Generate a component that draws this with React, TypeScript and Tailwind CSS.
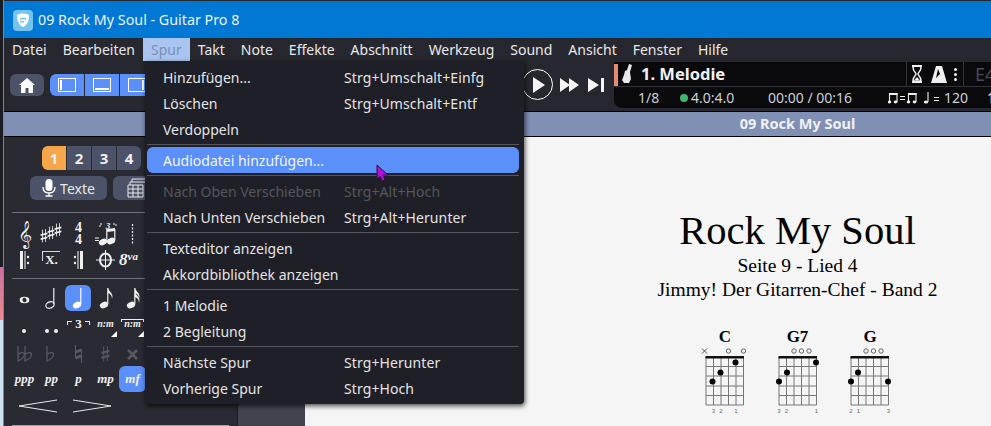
const menuBar = ["Datei", "Bearbeiten", "Spur", "Takt", "Note", "Effekte", "Abschnitt", "Werkzeug", "Sound", "Ansicht", "Fenster", "Hilfe"];

function MenuRow({ label, keys, off, on }: { label: string; keys?: string; off?: boolean; on?: boolean }) {
  return (
    <div className={`flex h-[26px] items-center rounded-md pl-[16px] text-[14px] ${on ? "bg-[#5b8ff9] text-[#f2f6ff]" : off ? "text-[#55565c]" : "text-[#e4e4e6]"}`}>
      <span className="w-[181px] shrink-0">{label}</span>
      {keys && <span className="tracking-[0.1px]">{keys}</span>}
    </div>
  );
}

function Sep() {
  return <div className="my-[2px] h-px bg-[#55565c]" />;
}

function ChordBox({ name, dots, top, fingers, mute }: { name: string; dots: number[][]; top: string[]; fingers: string[]; mute?: boolean }) {
  const xs = [0, 7.5, 15, 22.5, 30, 37.5];
  return (
    <div className="flex w-[38px] flex-col items-center">
      <div className="h-[17px] font-['Liberation_Serif',serif] text-[17px] font-bold leading-[17px] text-black">{name}</div>
      <svg width="52" height="72" viewBox="-7 0 52 72" className="-mx-[7px] shrink-0">
        {xs.map((x) => (
          <line key={x} x1={x} y1="12" x2={x} y2="60" stroke="#777" strokeWidth="1" />
        ))}
        {[12, 21.5, 31, 41, 50.5, 60].map((y) => (
          <line key={y} x1="0" y1={y} x2="37.5" y2={y} stroke="#777" strokeWidth="1" />
        ))}
        <rect x="-0.5" y="11" width="38.5" height="2.500" fill="#111" />
        {dots.map(([x, y]) => (
          <circle key={`${x}-${y}`} cx={x} cy={y} r="3" fill="#000" />
        ))}
        {top.map((t, i) =>
          t === "o" ? <circle key={i} cx={xs[i]} cy="6" r="2.200" fill="none" stroke="#555" strokeWidth="0.9" /> : null
        )}
        {mute && <path d="M-4 3.500l5 5m0-5l-5 5" stroke="#444" strokeWidth="0.9" />}
        {fingers.map((f, i) =>
          f ? (
            <text key={i} x={xs[i]} y="68" fontSize="6" fill="#666" textAnchor="middle" fontFamily="Liberation Sans">
              {f}
            </text>
          ) : null
        )}
      </svg>
    </div>
  );
}

// small notation icons, all drawn on a 27 wide cell
function Cell({ children, h = 24, color = "#f0f0f2" }: { children: React.ReactNode; h?: number; color?: string }) {
  return (
    <svg width="27" height={h} viewBox={`0 0 27 ${h}`} className="shrink-0" fill={color} stroke={color} strokeWidth="0">
      {children}
    </svg>
  );
}

function SharpMark({ x, y, s = 1 }: { x: number; y: number; s?: number }) {
  return (
    <g transform={`translate(${x} ${y}) scale(${s})`}>
      <path d="M-1.800-7.500V7.500M1.800-8V7" strokeWidth="1" fill="none" />
      <path d="M-4-2.200L4-4.200V-2L-4 0zM-4 2.500L4 .5V2.700L-4 4.700z" />
    </g>
  );
}

function FlatMark({ x, y }: { x: number; y: number }) {
  return <path transform={`translate(${x} ${y})`} d="M-3-9V6C1 4 3.500 2 3.500-.5 3.500-3-.5-3-3-.5" fill="none" strokeWidth="1.300" />;
}

function Note({ x, y, stem = 15, flags = 0, hollow }: { x: number; y: number; stem?: number; flags?: number; hollow?: boolean }) {
  return (
    <g>
      <ellipse cx={x} cy={y} rx="4.300" ry="3.100" transform={`rotate(-22 ${x} ${y})`} fill={hollow ? "none" : undefined} strokeWidth={hollow ? 1.200 : 0} />
      <line x1={x + 3.800} y1={y - 1} x2={x + 3.800} y2={y - stem} strokeWidth="1.200" />
      {flags > 0 && <path d={`M${x + 4} ${y - stem}c1 4 6 5 4 11c0-4-2-5-4-6z`} />}
      {flags > 1 && <path d={`M${x + 4} ${y - stem + 4}c1 4 6 5 4 11c0-4-2-5-4-6z`} />}
    </g>
  );
}

function Dyn({ c, on }: { c: string; on?: boolean }) {
  return (
    <span className={`flex h-[26px] w-[27px] shrink-0 items-center justify-center rounded-md font-['Liberation_Serif',serif] text-[13px] font-bold italic text-[#f0f0f2] ${on ? "bg-[#5b8ff9]" : ""}`}>
      {c}
    </span>
  );
}

function TupletMark({ wide }: { wide?: boolean }) {
  return (
    <span className="relative flex h-[22px] w-[27px] shrink-0 justify-center font-['Liberation_Serif',serif] text-[10px] font-bold italic leading-[16px] text-[#f0f0f2]">
      {wide && <span className="absolute left-[2px] right-[2px] top-[3px] h-[3px] border-x border-t border-[#f0f0f2]" />}
      n:m
      <span className="absolute bottom-[1px] right-[2px] h-0 w-0 border-b-[6px] border-l-[6px] border-b-white border-l-transparent" />
    </span>
  );
}

function Sidebar() {
  return (
    <aside className="flex w-[233px] shrink-0 flex-col overflow-hidden bg-[#292a32] px-[8px]">
      <div className="ml-[30px] mt-[9px] flex h-[24px] w-[99px] shrink-0 overflow-hidden rounded-md text-[15px] font-bold text-[#f0f0f2]">
        <span className="flex w-[24px] items-center justify-center bg-[#f5a54a]">1</span>
        <span className="flex w-[25px] items-center justify-center border-l border-[#292a32] bg-[#4c5368]">2</span>
        <span className="flex w-[25px] items-center justify-center border-l border-[#292a32] bg-[#4c5368]">3</span>
        <span className="flex w-[25px] items-center justify-center border-l border-[#292a32] bg-[#4c5368]">4</span>
      </div>
      <div className="ml-[18px] mt-[6px] flex h-[24px] shrink-0 gap-[6px]">
        <div className="flex w-[77px] shrink-0 items-center justify-center gap-[4px] rounded-md bg-[#4c5368] text-[14px] text-[#e8e8ea]">
          <svg width="14" height="18" viewBox="0 0 14 18" fill="#ffffff">
            <rect x="3.500" y="0" width="7" height="12" rx="3.500" />
            <path d="M1 8c0 4 2.500 6 6 6s6-2 6-6M7 14v3M3.500 17h7" fill="none" stroke="#ffffff" strokeWidth="1.300" />
          </svg>
          Texte
        </div>
        <div className="flex w-[50px] shrink-0 items-center justify-center rounded-md bg-[#4c5368]">
          <svg width="22" height="20" viewBox="0 0 22 20" fill="none" stroke="#e8e8ea" strokeWidth="1">
            <path d="M5 4V1h16v13h-3M3 7V4h16v12M1 7h15v12H1zM1 11h15M1 15h15M6 7v12M11 7v12" />
          </svg>
        </div>
      </div>
      <div className="mt-[12px] h-px shrink-0 bg-[#70727a]" />

      <div className="-ml-px mt-[9px] flex h-[24px] shrink-0">
        <span className="flex w-[27px] shrink-0 items-center justify-center font-['DejaVu_Sans',sans-serif] text-[24px] leading-none text-[#f0f0f2]">𝄞</span>
        <Cell>
          <SharpMark x={6} y={14} s={0.85} />
          <SharpMark x={13} y={11} s={0.85} />
          <SharpMark x={20} y={8} s={0.85} />
        </Cell>
        <span className="flex w-[27px] shrink-0 flex-col items-center justify-center font-['Liberation_Serif',serif] text-[14px] font-bold leading-[12px] text-[#f0f0f2]">
          <span>4</span>
          <span>4</span>
        </span>
        <Cell>
          <path d="M3 16h4M3 18.500h4" strokeWidth="1" />
          <Note x={11} y={20} stem={13} />
          <Note x={19} y={19} stem={12} />
          <path d="M15 7l8-1v3l-8 1z" />
          <path d="M8 5V2h3M21 2h3v3" strokeWidth="1" strokeDasharray="2 1" fill="none" />
          <text x="16" y="7" fontSize="9" fontWeight="700" fontStyle="italic" textAnchor="middle" fontFamily="Liberation Serif">3</text>
        </Cell>
        <Cell>
          <line x1="13.500" y1="2" x2="13.500" y2="22" strokeWidth="1.200" strokeDasharray="2 1.500" />
        </Cell>
      </div>
      <div className="-ml-px mt-[4px] flex h-[20px] shrink-0">
        <Cell h={20}>
          <path d="M9 1h3v18H9zM13.500 1h1v18h-1z" />
          <circle cx="17" cy="7" r="1.200" />
          <circle cx="17" cy="13" r="1.200" />
        </Cell>
        <span className="relative flex h-[20px] w-[27px] shrink-0 justify-center font-['Liberation_Serif',serif] text-[13px] font-bold leading-[20px] text-[#f0f0f2]">
          <span className="absolute left-[4px] top-[1px] h-[10px] w-[18px] border-l border-t border-[#d8d8da]" />
          X.
        </span>
        <Cell h={20}>
          <path d="M15 1h3v18h-3zM12.500 1h1v18h-1z" />
          <circle cx="10" cy="7" r="1.200" />
          <circle cx="10" cy="13" r="1.200" />
        </Cell>
        <Cell h={20}>
          <ellipse cx="13.500" cy="10" rx="5.500" ry="6.500" fill="none" strokeWidth="2" />
          <path d="M13.500 0v20M4 10h19" strokeWidth="1" />
        </Cell>
        <span className="w-[27px] shrink-0 whitespace-nowrap font-['Liberation_Serif',serif] text-[17px] font-bold italic leading-[20px] text-[#f0f0f2]">
          8<span className="relative -top-[5px] text-[11px]">va</span>
        </span>
      </div>
      <div className="mt-[8px] h-px shrink-0 bg-[#70727a]" />

      <div className="-ml-px mt-[6px] flex h-[26px] shrink-0">
        <Cell h={26}>
          <ellipse cx="13.500" cy="15" rx="4.800" ry="3.300" />
          <ellipse cx="13.500" cy="15" rx="2" ry="2.200" fill="#292a32" transform="rotate(-30 13.500 15)" />
        </Cell>
        <Cell h={26}>
          <Note x={12} y={20} stem={17} hollow />
        </Cell>
        <span className="flex h-[26px] w-[26px] shrink-0 items-center justify-center rounded-md bg-[#5b8ff9]">
          <Cell h={26} color="#ffffff">
            <Note x={12} y={20} stem={17} />
          </Cell>
        </span>
        <span className="w-px shrink-0" />
        <Cell h={26}>
          <Note x={12} y={20} stem={17} flags={1} />
        </Cell>
        <Cell h={26}>
          <Note x={12} y={20} stem={17} flags={2} />
        </Cell>
      </div>
      <div className="-ml-px mt-[5px] flex h-[22px] shrink-0">
        <Cell h={22}>
          <circle cx="13" cy="15" r="2" />
        </Cell>
        <Cell h={22}>
          <circle cx="9" cy="15" r="2" />
          <circle cx="18" cy="15" r="2" />
        </Cell>
        <span className="relative flex h-[22px] w-[27px] shrink-0 justify-center font-['Liberation_Serif',serif] text-[13px] font-bold leading-[16px] text-[#f0f0f2]">
          <span className="absolute left-[2px] top-[5px] h-[4px] w-[5px] border-l border-t border-[#f0f0f2]" />
          3
          <span className="absolute right-[2px] top-[5px] h-[4px] w-[5px] border-r border-t border-[#f0f0f2]" />
        </span>
        <TupletMark />
        <TupletMark wide />
      </div>
      <div className="-ml-px mt-[6px] flex h-[20px] shrink-0">
        <Cell h={20} color="#575862">
          <g strokeWidth="1.300">
            <FlatMark x={10} y={11} />
            <FlatMark x={17} y={11} />
          </g>
        </Cell>
        <Cell h={20} color="#575862">
          <FlatMark x={12} y={11} />
        </Cell>
        <Cell h={20} color="#575862">
          <path d="M10.500 1v13M16.500 6v13" strokeWidth="1.200" fill="none" />
          <path d="M10.500 6.500l6-2v3l-6 2zM10.500 12.500l6-2v3l-6 2z" />
        </Cell>
        <Cell h={20} color="#575862">
          <SharpMark x={13.500} y={10} />
        </Cell>
        <Cell h={20} color="#575862">
          <path d="M9 6l9 9M18 6l-9 9" strokeWidth="2.600" />
        </Cell>
      </div>
      <div className="-ml-px mt-[2px] flex h-[26px] shrink-0">
        <Dyn c="ppp" />
        <Dyn c="pp" />
        <Dyn c="p" />
        <Dyn c="mp" />
        <Dyn c="mf" on />
      </div>
      <svg width="110" height="14" viewBox="0 0 110 14" className="ml-[1px] mt-[7px] shrink-0" fill="none" stroke="#e8e8ea" strokeWidth="1">
        <path d="M44 1L6 7l38 6M60 1l38 6-38 6" />
      </svg>
      <div className="mt-[12px] h-px shrink-0 bg-[#a0a2aa]" />
    </aside>
  );
}

function PanelIcon({ d }: { d: string }) {
  return (
    <span className="flex h-[22px] w-[34px] items-center justify-center bg-[#5b8ff9]">
      <svg width="18" height="14" viewBox="0 0 18 14" fill="#ffffff">
        <path d="M0 0h18v14H0zM1 1v12h16V1z" fillRule="evenodd" />
        <path d={d} />
      </svg>
    </span>
  );
}

function SmallBeam({ x }: { x: number }) {
  return (
    <g transform={`translate(${x} 0)`}>
      <path d="M1.500 2h8v2h-8z" />
      <path d="M1.500 2v9M9 2v9" stroke="#f0f0f0" strokeWidth="1.100" />
      <ellipse cx="1.500" cy="11" rx="1.800" ry="1.400" />
      <ellipse cx="7.500" cy="11" rx="1.800" ry="1.400" />
    </g>
  );
}

export default function App() {
  return (
    <div className="flex h-[426px] w-[991px] overflow-hidden font-['Noto_Sans','Open_Sans',sans-serif]">
      <div className="flex w-[3px] shrink-0 flex-col">
        <div className="h-[267px] shrink-0 bg-[#1c1d22]" />
        <div className="h-[53px] shrink-0 bg-gradient-to-b from-[#c870a0] to-[#ee8a90]" />
        <div className="flex-1 bg-[#cfe4f2]" />
      </div>

      <div className="relative flex min-w-0 flex-1 flex-col border-l border-[#4a93d8] bg-[#27282f]">
        <header className="mt-px flex h-[37px] shrink-0 items-center bg-[#0178d4] pl-[9px] pt-[1px] text-[14.3px] text-[#eaf4fc]">
          <span className="mr-[5px] flex h-[21px] w-[20px] items-center justify-center rounded-[4px] bg-[#74c4ee]">
            <svg width="14" height="15" viewBox="0 0 14 15">
              <path d="M1 2c3-2 9-2 12 0 0 6-2 10-6 12C3 12 1 8 1 2z" fill="#fff" />
              <path d="M4 5h6v1.500H4zM4 8h4v1.500H4z" fill="#74c4ee" />
            </svg>
          </span>
          09 Rock My Soul - Guitar Pro 8
        </header>

        <nav className="flex h-[23px] shrink-0 items-center text-[14px] text-[#e8e8ea]">
          {menuBar.map((m) => (
            <span key={m} className={`flex h-[23px] items-center px-[8px] ${m === "Spur" ? "bg-[#a9c5ef] text-[#7d90b8]" : ""}`}>
              {m}
            </span>
          ))}
        </nav>

        <div className="flex h-[51px] shrink-0 border-b border-black">
          <div className="flex w-[518px] items-start pl-[6px] pt-[13px]">
            <span className="flex h-[22px] w-[34px] items-center justify-center rounded-md bg-[#4c5368]">
              <svg width="16" height="15" viewBox="0 0 16 15" fill="#ffffff">
                <path d="M8 0l8 7h-2v8H9.500v-5h-3v5H2V7H0z" />
              </svg>
            </span>
            <span className="ml-[6px] flex gap-px overflow-hidden rounded-md">
              <PanelIcon d="M2 2h2v10H2z" />
              <PanelIcon d="M2 10h14v2H2z" />
              <PanelIcon d="M14 2h2v10h-2z" />
            </span>
          </div>

          <div className="flex w-[92px] shrink-0 items-center pb-[3px]">
            <span className="flex h-[31px] w-[31px] items-center justify-center rounded-full border border-white pl-[2px]">
              <svg width="14" height="18" viewBox="0 0 14 18">
                <path d="M1 1l12 8-12 8z" fill="#f4f4f4" />
              </svg>
            </span>
            <svg width="19" height="14" viewBox="0 0 19 14" fill="#f4f4f4" className="ml-[7px]">
              <path d="M0 0l10 7-10 7zM9 0l10 7-10 7z" />
            </svg>
            <svg width="16" height="14" viewBox="0 0 16 14" fill="#f4f4f4" className="ml-[9px]">
              <path d="M0 0l11 7-11 7zM13 0h3v14h-3z" />
            </svg>
          </div>

          <div className="mb-[3px] mt-px flex min-w-0 flex-1 flex-col overflow-hidden rounded-bl-lg bg-[#0a0a0d]">
            <div className="flex h-[25px] shrink-0 items-center border-b border-[#34353b]">
              <span className="mt-[1px] h-[22px] w-[4px] shrink-0 bg-[#e58b73]" />
              <svg width="10" height="20" viewBox="0 0 10 20" className="ml-[4px] shrink-0">
                <path d="M7 0l3 1-2 7 1 7-2 4-5 0-2-3 2-5 1-4 2-1z" fill="#e8e8ea" />
              </svg>
              <span className="ml-[9px] w-[265px] shrink-0 text-[16.5px] font-bold text-[#f2f2f4]">1. Melodie</span>
              <span className="flex h-[25px] w-[58px] shrink-0 items-center border-x border-[#34353b] pl-[4px]">
                <svg width="12" height="18" viewBox="0 0 12 18" fill="#f0f0f0" stroke="#f0f0f0" strokeWidth="1.500">
                  <path d="M1 1h10M1 17h10" strokeWidth="2" />
                  <path d="M2 2c0 5 3 5 3 7s-3 2-3 7h8c0-5-3-5-3-7s3-2 3-7" fill="none" />
                  <path d="M3.500 15l2.500-3 2.500 3z" strokeWidth="0" />
                </svg>
                <svg width="16" height="17" viewBox="0 0 16 17" fill="#f0f0f0" className="ml-[8px]">
                  <path d="M5 0h6l5 17H0zM7 3l-2 9 4-4z" fillRule="evenodd" />
                </svg>
                <svg width="3" height="13" viewBox="0 0 3 13" fill="#f0f0f0" className="ml-[7px]">
                  <circle cx="1.500" cy="1.500" r="1.500" />
                  <circle cx="1.500" cy="6.500" r="1.500" />
                  <circle cx="1.500" cy="11.500" r="1.500" />
                </svg>
              </span>
              <span className="ml-[11px] text-[18px] text-[#4a4b52]">E4</span>
            </div>
            <div className="flex h-[21px] shrink-0 items-center whitespace-nowrap text-[14px] text-[#cfd0d4]">
              <span className="ml-[24px] w-[42px] shrink-0">1/8</span>
              <span className="mr-[3px] flex h-[8px] w-[8px] shrink-0 rounded-full bg-[#3fb56d]" />
              <span className="w-[77px] shrink-0">4.0:4.0</span>
              <span className="w-[120px] shrink-0">00:00 / 00:16</span>
              <svg width="54" height="14" viewBox="0 0 54 14" fill="#f0f0f0" className="shrink-0" stroke="#f0f0f0" strokeWidth="0">
                <SmallBeam x={0} />
                <path d="M12 5.500h5M12 8.500h5" strokeWidth="1" />
                <SmallBeam x={19} />
                <ellipse cx="38" cy="11" rx="2.200" ry="1.600" />
                <path d="M40 11V1" strokeWidth="1.100" />
                <path d="M46 6.500h5M46 9.500h5" strokeWidth="1" />
              </svg>
              <span className="ml-[2px] w-[43px] shrink-0">120</span>
              <span className="text-[#e8e8ea]">1</span>
            </div>
          </div>
        </div>

        <div className="flex h-[25px] shrink-0 items-center justify-center border-b border-black bg-[#8090b4] pl-[600px] text-[14.5px] font-bold text-[#f0f2f6]">
          09 Rock My Soul
        </div>

        <div className="flex min-h-0 flex-1">
          <Sidebar />
          <div className="w-[68px] shrink-0 border-l border-[#1c1d22] bg-[#42434d]" />
          <main className="flex min-w-0 flex-1 flex-col items-center bg-[#f5f5f5] pl-[299px] font-['Liberation_Serif',serif] text-black">
            <h1 className="mt-[71px] whitespace-nowrap text-[40.5px] font-normal leading-[46px]">Rock My Soul</h1>
            <p className="whitespace-nowrap text-[19.5px] leading-[24px]">Seite 9 - Lied 4</p>
            <p className="whitespace-nowrap text-[19.5px] leading-[24px]">Jimmy! Der Gitarren-Chef - Band 2</p>
            <div className="mt-[26px] flex gap-[34.5px]">
              <ChordBox name="C" mute top={["x", "", "", "o", "", "o"]} dots={[[6.500, 36.500], [14.500, 27.500], [29.500, 17.500]]} fingers={["", "3", "2", "", "1", ""]} />
              <ChordBox name="G7" top={["", "", "o", "o", "o", ""]} dots={[[0, 36.500], [8, 27.500], [37, 17.500]]} fingers={["3", "2", "", "", "", "1"]} />
              <ChordBox name="G" top={["", "", "o", "o", "o", ""]} dots={[[0, 36.500], [7, 27.500], [37, 36.500]]} fingers={["2", "1", "", "", "", "3"]} />
            </div>
          </main>
        </div>

        <div className="absolute left-[141px] top-[61px] w-[379px] rounded-b-sm bg-[#1f2027] pb-[3px] pl-[2px] pr-[5px] pt-[3px] shadow-[1px_2px_5px_rgba(0,0,0,0.7)]">
          <MenuRow label="Hinzufügen..." keys="Strg+Umschalt+Einfg" />
          <MenuRow label="Löschen" keys="Strg+Umschalt+Entf" />
          <MenuRow label="Verdoppeln" />
          <Sep />
          <MenuRow label="Audiodatei hinzufügen..." on />
          <Sep />
          <MenuRow label="Nach Oben Verschieben" keys="Strg+Alt+Hoch" off />
          <MenuRow label="Nach Unten Verschieben" keys="Strg+Alt+Herunter" />
          <Sep />
          <MenuRow label="Texteditor anzeigen" />
          <MenuRow label="Akkordbibliothek anzeigen" />
          <Sep />
          <MenuRow label="1 Melodie" />
          <MenuRow label="2 Begleitung" />
          <Sep />
          <MenuRow label="Nächste Spur" keys="Strg+Herunter" />
          <MenuRow label="Vorherige Spur" keys="Strg+Hoch" />
        </div>

        <svg width="14" height="18" viewBox="0 0 14 18" className="absolute left-[372px] top-[164px]">
          <path d="M1 1l11 10H7l2 5-3 1-2-5-3 3z" fill="#b010d8" stroke="#30103a" strokeWidth="1" />
        </svg>
      </div>
    </div>
  );
}
